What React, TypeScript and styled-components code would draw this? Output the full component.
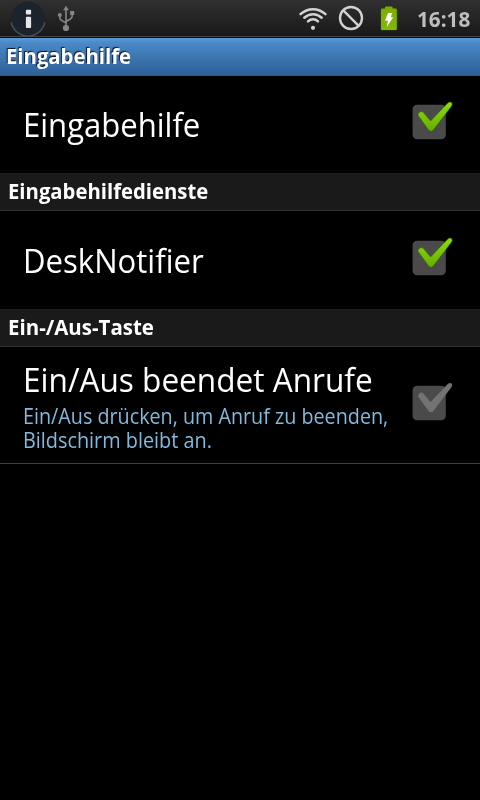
import React from "react";
import styled, { createGlobalStyle } from "styled-components";

const GlobalStyle = createGlobalStyle`
  html, body { margin: 0; background: #000; }
  body { font-family: "Open Sans", "Noto Sans", sans-serif; color: #fff; }
`;

const Screen = styled.main`
  width: 480px;
  height: 800px;
  overflow: hidden;
  background: #000;
`;

const StatusBar = styled.header`
  display: flex;
  align-items: flex-start;
  justify-content: space-between;
  box-sizing: border-box;
  height: 38px;
  padding: 0 9px 0 8px;
  background: linear-gradient(#303030, #191919 36px, #4a4541 36px, #4a4541 37px, #0b0d12 37px);
`;

const StatusGroup = styled.div`
  display: flex;
  height: 37px;
`;

const Condensed = styled.span<{ $scale: number }>`
  display: block;
  width: max-content;
  white-space: nowrap;
  transform: scaleX(${(p) => p.$scale});
  transform-origin: left;
`;

const Clock = styled.time`
  width: 54px;
  margin-left: 12px;
  font-weight: 700;
  font-size: 21px;
  line-height: 38px;
  color: #bebebe;
`;

const TitleBar = styled.h1`
  box-sizing: border-box;
  height: 38px;
  margin: 0;
  padding-left: 6px;
  background: linear-gradient(#5c9bdc, #4a88c6 5px, #427db9 14px, #2d6096 37px, #264f7d);
  font-size: 21px;
  line-height: 36px;
  text-shadow: -1px -1px 1px rgba(0, 0, 0, 0.85);
`;

const SectionHeader = styled.h2`
  box-sizing: border-box;
  height: 38px;
  margin: 0;
  padding-left: 8px;
  border-bottom: 1px solid #323232;
  background: #1a1a1a;
  font-size: 21px;
  line-height: 36px;
`;

const Preference = styled.div<{ $height: number; $divider?: boolean }>`
  display: flex;
  justify-content: space-between;
  align-items: center;
  box-sizing: border-box;
  height: ${(p) => p.$height}px;
  padding: 0 24px 0 23px;
  border-bottom: ${(p) => (p.$divider ? "1px solid #404040" : "none")};
`;

const Texts = styled.div`
  flex: 1;
  min-width: 0;
  padding-top: 1px;
`;

const Label = styled.div`
  font-size: 33px;
  line-height: 40px;
`;

const Summary = styled.div`
  margin-top: 4px;
  font-size: 21px;
  line-height: 24px;
  color: #83b9dc;
`;

const CheckSlot = styled.span<{ $lift: number }>`
  display: block;
  flex: none;
  height: 48px;
  margin-bottom: ${(p) => p.$lift}px;
  svg { display: block; }
`;

function Check({ on, lift = 5 }: { on?: boolean; lift?: number }) {
  return (
    <CheckSlot $lift={lift}>
      <svg width="48" height="48" viewBox="0 0 48 48">
        <defs>
          <linearGradient id="tick" x1="0" y1="0" x2="0" y2="1">
            <stop offset="0" stopColor="#89e000" />
            <stop offset="1" stopColor="#66ad00" />
          </linearGradient>
        </defs>
        <rect x="4.6" y="6.8" width="33.2" height="34.4" rx="4.5" fill="#4a4a4a" />
        <path
          d="M10.2 17.6Q9.4 15.8 11.6 14.2Q13.8 12.8 15.4 14.6L22.6 23L40 4.8Q42 3.2 43.6 4.6Q44.9 6 43.6 8L25.2 32.2Q23 34.4 20.8 32.2Z"
          fill={on ? "url(#tick)" : "#737373"}
          stroke={on ? "#3d5417" : "none"}
          strokeWidth=".5"
        />
      </svg>
    </CheckSlot>
  );
}

const InfoIcon = () => (
  <svg width="40" height="37" viewBox="0 0 40 37">
    <circle cx="20" cy="18.5" r="17" fill="#1b242c" />
    <path d="M3.2 22.5A17.2 17.2 0 0 0 36.8 22.5" fill="none" stroke="#50555b" strokeWidth="1.2" />
    <rect x="17.9" y="9.8" width="5.2" height="4.8" rx="1" fill="#e8e8e8" />
    <rect x="17.9" y="16.8" width="5.2" height="11.2" rx="1" fill="#e8e8e8" />
  </svg>
);

const UsbIcon = () => (
  <svg width="36" height="37" viewBox="0 0 36 37" fill="none" stroke="#868686" strokeWidth="1.6">
    <path d="M18 9V27M11.8 15.5V17.5Q11.8 19.5 14 20.6L18 23M24.2 14.5V16Q24.2 18 22 19.2L18 21.5" />
    <path d="M18 5.8L20.9 10.2H15.1Z" fill="#868686" stroke="none" />
    <circle cx="11.8" cy="15" r="2" fill="#868686" stroke="none" />
    <rect x="22.2" y="11" width="4" height="4" fill="#868686" stroke="none" />
    <circle cx="18" cy="28" r="3.1" fill="#868686" stroke="none" />
  </svg>
);

const WifiIcon = () => (
  <svg width="32" height="37" viewBox="0 0 32 37" fill="none" stroke="#d2d2d2" strokeWidth="2.5" strokeLinecap="round">
    <path d="M3.5 14.2Q9 9.2 16 9.2T28.5 14.2" />
    <path d="M7.3 17.7Q11.2 14.2 16 14.2T24.7 17.7" />
    <path d="M11 21.3Q13.2 19.2 16 19.2T21 21.3" />
    <circle cx="16" cy="27.8" r="2.1" fill="#d2d2d2" stroke="none" />
  </svg>
);

const BlockedIcon = () => (
  <svg width="44" height="37" viewBox="0 0 44 37" fill="none" stroke="#d2d2d2" strokeWidth="2.4">
    <circle cx="22" cy="18" r="11" />
    <path d="M14.3 10.4L29.7 25.8" />
  </svg>
);

const BatteryIcon = () => (
  <svg width="32" height="37" viewBox="0 0 32 37">
    <defs>
      <filter id="glow" x="-30%" y="-30%" width="160%" height="160%">
        <feGaussianBlur stdDeviation="1.5" />
      </filter>
      <linearGradient id="cell" x1="0" y1="0" x2="0" y2="1">
        <stop offset="0" stopColor="#7cab00" />
        <stop offset="1" stopColor="#84b80a" />
      </linearGradient>
    </defs>
    <path d="M8 9H24V30H8Z" fill="#426000" opacity=".6" filter="url(#glow)" />
    <path d="M8 10Q8 8.6 9.4 8.6H12V7Q12 6.6 12.6 6.6H19Q19.6 6.6 19.6 7V8.6H22.4Q23.8 8.6 23.8 10V29Q23.8 30 22.8 30H9Q8 30 8 29Z" fill="url(#cell)" />
    <path d="M15 13L19.2 13L17.8 17.2H20.2L13.6 27.2L15 20.8H12Z" fill="#fff" />
  </svg>
);

export default function App() {
  return (
    <>
      <GlobalStyle />
      <Screen>
        <StatusBar>
          <StatusGroup>
            <InfoIcon />
            <UsbIcon />
          </StatusGroup>
          <StatusGroup>
            <WifiIcon />
            <BlockedIcon />
            <BatteryIcon />
            <Clock><Condensed $scale={0.985}>16:18</Condensed></Clock>
          </StatusGroup>
        </StatusBar>
        <TitleBar><Condensed $scale={0.966}>Eingabehilfe</Condensed></TitleBar>
        <Preference $height={97}>
          <Texts>
            <Label><Condensed $scale={0.941}>Eingabehilfe</Condensed></Label>
          </Texts>
          <Check on />
        </Preference>
        <SectionHeader><Condensed $scale={0.966}>Eingabehilfedienste</Condensed></SectionHeader>
        <Preference $height={98}>
          <Texts>
            <Label><Condensed $scale={0.942}>DeskNotifier</Condensed></Label>
          </Texts>
          <Check on />
        </Preference>
        <SectionHeader><Condensed $scale={0.975}>Ein-/Aus-Taste</Condensed></SectionHeader>
        <Preference $height={117} $divider>
          <Texts>
            <Label><Condensed $scale={0.957}>Ein/Aus beendet Anrufe</Condensed></Label>
            <Summary>
              <Condensed $scale={0.94}>Ein/Aus drücken, um Anruf zu beenden,</Condensed>
              <Condensed $scale={0.945}>Bildschirm bleibt an.</Condensed>
            </Summary>
          </Texts>
          <Check lift={4} />
        </Preference>
      </Screen>
    </>
  );
}
